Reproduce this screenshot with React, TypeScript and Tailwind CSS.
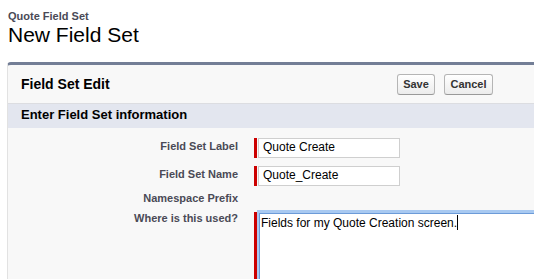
const font = { fontFamily: '"Liberation Sans", Arial, sans-serif' };

function Field({ value }: { value: string }) {
  return (
    <div className="flex">
      <div className="w-[3px] h-[20px] bg-[#c00] mr-px" />
      <div className="w-[142px] h-[20px] border border-[#cfcfcf] bg-white pl-[4px] pt-px text-[12px] leading-[14px] text-black">
        {value}
      </div>
    </div>
  );
}

function Label({ children, className = "" }: { children: string; className?: string }) {
  return (
    <div className={`w-[230px] shrink-0 text-right text-[11px] leading-[14px] font-bold text-[#4a4a56] ${className}`}>
      {children}
    </div>
  );
}

export default function App() {
  return (
    <div className="w-[534px] h-[279px] overflow-hidden bg-white" style={font}>
      <div className="pt-[10px] pl-[8px]">
        <div className="text-[11px] leading-[13px] font-bold text-[#4a4a56]">Quote Field Set</div>
        <div className="text-[21px] leading-[24px] text-black">New Field Set</div>
      </div>

      <div className="mt-[15px] ml-[7px] w-[600px] border-t-[3px] border-t-[#737e96] border-l border-l-[#e2e2e2] rounded-tl-[4px] bg-[#f8f8f8]">
        <div className="flex items-center h-[38px] pl-[13px]">
          <div className="w-[376px] text-[14px] leading-[17px] font-bold text-black">Field Set Edit</div>
          <div className="flex gap-[9px]">
            <button className="w-[38px] h-[21px] rounded-[3px] border border-[#b5b5b5] border-b-[#999] bg-gradient-to-b from-white to-[#ececec] text-[11px] font-bold text-[#333]">
              Save
            </button>
            <button className="w-[49px] h-[21px] rounded-[3px] border border-[#b5b5b5] border-b-[#999] bg-gradient-to-b from-white to-[#ececec] text-[11px] font-bold text-[#333]">
              Cancel
            </button>
          </div>
        </div>

        <div className="h-[25px] border-t border-t-[#dcdde1] bg-[#e3e6ef] pl-[13px] pt-[3px]">
          <div className="text-[13px] leading-[16px] font-bold text-black">Enter Field Set information</div>
        </div>

        <div className="pt-[10px] pb-10">
          <div className="flex items-start">
            <Label className="pt-px">Field Set Label</Label>
            <div className="ml-[16px]">
              <Field value="Quote Create" />
            </div>
          </div>
          <div className="flex items-start mt-[8px]">
            <Label className="pt-px">Field Set Name</Label>
            <div className="ml-[16px]">
              <Field value="Quote_Create" />
            </div>
          </div>
          <div className="flex items-start mt-[5px]">
            <Label>Namespace Prefix</Label>
          </div>
          <div className="flex items-start mt-[5px]">
            <Label className="pt-px">Where is this used?</Label>
            <div className="ml-[16px] flex">
              <div className="w-[3px] h-[70px] mt-[2px] bg-[#c00]" />
              <div className="w-[320px] h-[80px] bg-[#a8c9f1] pt-[3px] pl-[2px]">
                <div className="h-full border-t border-l border-[#6c9bd8] bg-white pl-[1px] pt-px text-[12px] leading-[14px] text-black">
                  Fields for my Quote Creation screen.
                  <span className="inline-block w-px h-[15px] bg-black align-[-3px]" />
                </div>
              </div>
            </div>
          </div>
        </div>
      </div>
    </div>
  );
}
